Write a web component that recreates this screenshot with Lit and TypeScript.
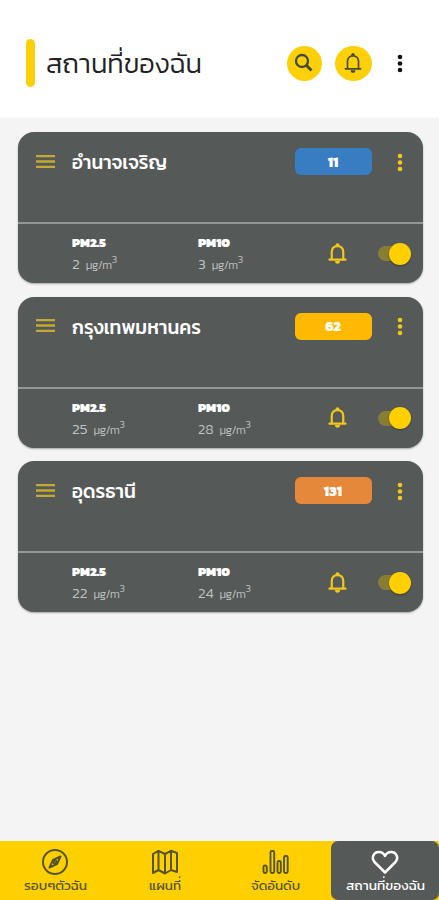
import { LitElement, html, css, svg } from "lit";
import { customElement, property } from "lit/decorators.js";

const FONT = css`"Kanit", "Prompt", "Noto Sans Thai", "Noto Sans", "Open Sans", sans-serif`;

const bell = (w: number) => svg`
  <path d="M3.6 18.4H20.4M6 18V10.4C6 6.6 8.5 4.2 12 4.2S18 6.6 18 10.4V18" fill="none" stroke="currentColor" stroke-width=${w} stroke-linecap="round"/>
  <path d="M9.9 4.2a2.1 3 0 0 1 4.2 0zM9.4 19.8h5.2a2.6 2.8 0 0 1-5.2 0z" fill="currentColor"/>`;

const dots = svg`<circle cx="4" cy="3" r="2.3"/><circle cx="4" cy="9.5" r="2.3"/><circle cx="4" cy="16" r="2.3"/>`;

/* One line of text laid out to an exact width. */
@customElement("fit-text")
class FitText extends LitElement {
  @property() text = "";
  @property({ type: Number }) width = 0;
  static styles = css`
    :host { display: block; }
    svg { display: block; overflow: visible; height: 1em; }
    text { font: inherit; fill: currentColor; }
  `;
  render() {
    return html`<svg width=${this.width}><text x="0" y="1em" textLength=${this.width} lengthAdjust="spacingAndGlyphs">${this.text}</text></svg>`;
  }
}

interface Place { name: string; nameWidth: number; aqi: string; tone: string; pm25: string; pm10: string; }

@customElement("place-card")
class PlaceCard extends LitElement {
  @property({ attribute: false }) place!: Place;
  static styles = css`
    :host { display: block; height: 151px; border-radius: 16px; background: #555958; overflow: hidden; box-shadow: 0 1px 2px #0005; color: #fff; font-family: ${FONT}; }
    .top { height: 92px; box-sizing: border-box; display: flex; align-items: flex-start; padding: 16px 19.5px 0 18px; border-bottom: 2px solid #929896; }
    .menu { width: 19px; height: 13px; margin: 6.5px 17px 0 0; color: #c4a932; }
    .name { font-size: 20px; font-weight: 500; margin-top: 1px; flex: 1; }
    .badge { width: 77px; height: 27px; border-radius: 6px; display: grid; place-items: center; font-size: 14px; font-weight: 800; padding-top: 1px; box-sizing: border-box; }
    .blue { background: #387cc2; }
    .amber { background: #ffb900; }
    .orange { background: #e68839; }
    .more { width: 8px; height: 19px; margin: 4.5px 0 0 24px; fill: #f3c812; }
    .bottom { height: 59px; display: flex; padding: 0 12px 0 54px; box-sizing: border-box; }
    .metric { width: 126px; padding-top: 10px; }
    .label { font-size: 12.5px; font-weight: 900; height: 13px; margin-bottom: 8px; }
    .reading { display: flex; font-size: 14px; line-height: 18px; color: #bfc3c1; font-weight: 300; }
    .unit { font-size: 11.5px; margin-left: 6px; position: relative; top: 1px; letter-spacing: -.4px; }
    sup { font-size: 10.5px; line-height: 0; vertical-align: 6px; }
    .bell { width: 23px; height: 23px; margin: 17.5px 1px 0 2px; color: #f0c71a; }
    .toggle { display: flex; align-items: center; justify-content: flex-end; width: 33px; height: 22px; margin: 18.5px 0 0 auto; }
    .track { width: 24px; height: 15px; border-radius: 8px; background: #887d35; margin-right: -13px; }
    .thumb { width: 22px; height: 22px; border-radius: 50%; background: #ffcf00; box-shadow: 0 1px 2px #0005; }
    svg { display: block; flex: none; }
  `;
  metric(label: string, value: string) {
    return html`<div class="metric">
      <fit-text class="label" .text=${label} .width=${label === "PM10" ? 32 : 34}></fit-text>
      <div class="reading"><fit-text .text=${value} .width=${value.length * 7.8}></fit-text><span class="unit">µg/m<sup>3</sup></span></div>
    </div>`;
  }
  render() {
    const p = this.place;
    return html`
      <div class="top">
        <svg class="menu" viewBox="0 0 19 13"><path d="M0 1.2H19M0 6.5H19M0 11.8H19" stroke="currentColor" stroke-width="2.3"/></svg>
        <fit-text class="name" .text=${p.name} .width=${p.nameWidth}></fit-text>
        <div class="badge ${p.tone}">${p.aqi}</div>
        <svg class="more" viewBox="0 0 8 19">${dots}</svg>
      </div>
      <div class="bottom">
        ${this.metric("PM2.5", p.pm25)}${this.metric("PM10", p.pm10)}
        <svg class="bell" viewBox="0 0 24 24">${bell(2.3)}</svg>
        <div class="toggle"><span class="track"></span><span class="thumb"></span></div>
      </div>`;
  }
}

@customElement("app-root")
class AppRoot extends LitElement {
  static styles = css`
    :host { display: flex; flex-direction: column; height: 900px; background: #f4f4f4; font-family: ${FONT}; color: #333; overflow: hidden; }
    svg { display: block; flex: none; }
    header { height: 118px; flex: none; background: #fff; display: flex; align-items: center; padding: 8px 35.5px 0 26px; box-sizing: border-box; }
    .bar { width: 9px; height: 48px; border-radius: 5px; background: #fdcf08; margin-right: 11px; }
    .title { font-size: 27px; font-weight: 300; flex: 1; margin-top: -8px; color: #222; }
    .round { width: 35px; height: 35px; border-radius: 50%; background: #fdd00a; display: grid; place-items: center; color: #444939; margin-right: 13px; }
    .wide { width: 37px; margin-right: 24px; }
    .more { width: 8px; height: 19px; fill: #111; }
    main { flex: 1; display: flex; flex-direction: column; gap: 13.5px; padding: 14px 16px 0 18px; }
    nav { flex: none; height: 59.5px; display: grid; grid-template-columns: 110px 110px 111px 108px; background: #ffd000; color: #555523; }
    .tab { display: flex; flex-direction: column; align-items: center; padding-top: 7px; box-sizing: border-box; font-size: 12.5px; }
    .tab svg { width: 30px; height: 28px; margin-bottom: 1px; }
    .active { background: #555958; color: #fff; border-radius: 7px; }
  `;
  places: Place[] = [
    { name: "อำนาจเจริญ", nameWidth: 95, aqi: "11", tone: "blue", pm25: "2", pm10: "3" },
    { name: "กรุงเทพมหานคร", nameWidth: 129, aqi: "62", tone: "amber", pm25: "25", pm10: "28" },
    { name: "อุดรธานี", nameWidth: 64, aqi: "131", tone: "orange", pm25: "22", pm10: "24" },
  ];
  tabs = [
    { text: "รอบๆตัวฉัน", width: 63, icon: svg`<circle cx="15" cy="14" r="12"/><path d="M20.5 8.5L17 16L9.5 19.5L13 12Z"/><circle cx="15" cy="14" r="1.5"/>` },
    { text: "แผนที่", width: 32, icon: svg`<path d="M3 6L8.5 2.8L15 6L21 2.8L27 5V24L21 22L15 25.5L8.5 22L3 25ZM8.5 3V22M15 6V25M21 3V22"/>` },
    { text: "จัดอันดับ", width: 49, icon: svg`<g stroke-width="1.9"><rect x="2.5" y="17.5" width="3.3" height="7.5" rx="1.5"/><rect x="9.5" y="3" width="3.7" height="22" rx="1.5"/><rect x="16.5" y="13" width="3.3" height="12" rx="1.5"/><rect x="23" y="8" width="3.7" height="17" rx="1.5"/></g>` },
    { text: "สถานที่ของฉัน", width: 79, icon: svg`<path stroke-width="2.5" d="M15 24.5L5 14.5C0.5 10 3.7 4 9 4C12 4 14 6 15 8C16 6 18 4 21 4C26.3 4 29.5 10 25 14.5Z"/>` },
  ];
  render() {
    return html`
      <header>
        <span class="bar"></span>
        <fit-text class="title" .text=${"สถานที่ของฉัน"} .width=${156}></fit-text>
        <span class="round"><svg width="20" height="20" viewBox="0 0 20 20" fill="none" stroke="currentColor"><circle cx="8" cy="8" r="6" stroke-width="2.3"/><path d="M12.3 12.3L17.5 17.5" stroke-width="3"/></svg></span>
        <span class="round wide"><svg width="22" height="22" viewBox="0 0 24 24">${bell(1.8)}</svg></span>
        <svg class="more" viewBox="0 0 8 19">${dots}</svg>
      </header>
      <main>${this.places.map((p) => html`<place-card .place=${p}></place-card>`)}</main>
      <nav>${this.tabs.map((t, i) => html`<div class="tab ${i === 3 ? "active" : ""}">
        <svg viewBox="0 0 30 28" fill="none" stroke="currentColor" stroke-width="2" stroke-linejoin="round">${t.icon}</svg>
        <fit-text .text=${t.text} .width=${t.width}></fit-text>
      </div>`)}</nav>`;
  }
}
